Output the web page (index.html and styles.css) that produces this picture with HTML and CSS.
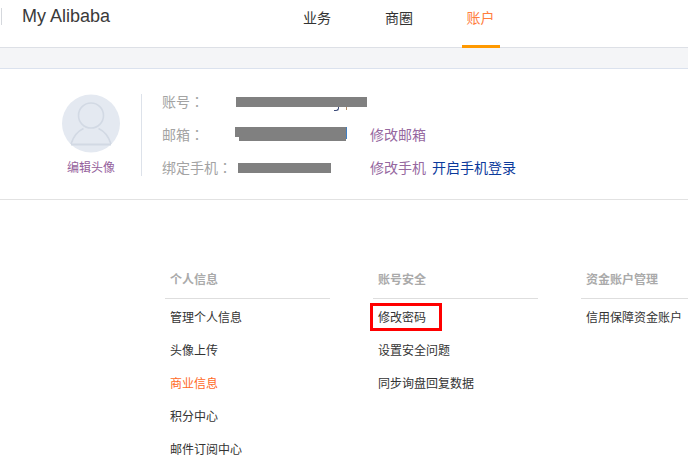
FILE: index.html
```html
<!DOCTYPE html>
<html lang="zh-CN">
<head>
<meta charset="utf-8">
<title>My Alibaba</title>
<link rel="stylesheet" href="styles.css">
</head>
<body>
<header class="topbar">
  <span class="brand-rule"></span>
  <span class="brand">My Alibaba</span>
  <nav class="tabs">
    <a class="tab">业务</a>
    <a class="tab">商圈</a>
    <a class="tab tab-active">账户</a>
  </nav>
</header>
<div class="band"></div>
<section class="profile">
  <div class="avatar-box">
    <svg class="avatar" width="58" height="59" viewBox="0 0 58 59">
      <circle cx="29" cy="29.500" r="29" fill="#e4e9f1"/>
      <circle cx="29" cy="21.500" r="12.500" fill="none" stroke="#d2d9e4" stroke-width="1.600"/>
      <path d="M9 50C11.500 42 16 37 21.500 34.500M36.500 34.500C42 37 46.500 42 49 50" fill="none" stroke="#d2d9e4" stroke-width="1.600"/>
      <path d="M9 50.500H49" stroke="#d2d9e4" stroke-width="1.800"/>
    </svg>
    <a class="avatar-link">编辑头像</a>
  </div>
  <div class="info">
    <div class="row">
      <span class="label">账号<span class="colon" lang="zh-TW">：</span></span>
      <span class="mask mask-account"></span>
    </div>
    <div class="row">
      <span class="label">邮箱<span class="colon" lang="zh-TW">：</span></span>
      <span class="mask-mail"><span class="mask mask-mail-a"></span><span class="mask mask-mail-b"></span><span class="mail-rest"></span></span>
      <a class="link-visited link-mail">修改邮箱</a>
    </div>
    <div class="row">
      <span class="label label-phone">绑定手机<span class="colon" lang="zh-TW">：</span></span>
      <span class="mask mask-phone"></span>
      <a class="link-visited link-phone">修改手机</a>
      <a class="link-blue">开启手机登录</a>
    </div>
  </div>
</section>
<main class="menus">
  <section class="menu">
    <h3 class="menu-title">个人信息</h3>
    <ul class="menu-list">
      <li class="menu-item">管理个人信息</li>
      <li class="menu-item">头像上传</li>
      <li class="menu-item menu-item-hot">商业信息</li>
      <li class="menu-item">积分中心</li>
      <li class="menu-item">邮件订阅中心</li>
    </ul>
  </section>
  <section class="menu">
    <h3 class="menu-title">账号安全</h3>
    <ul class="menu-list">
      <li class="menu-item menu-item-marked">修改密码<span class="red-box"></span></li>
      <li class="menu-item">设置安全问题</li>
      <li class="menu-item">同步询盘回复数据</li>
    </ul>
  </section>
  <section class="menu menu-last">
    <h3 class="menu-title">资金账户管理</h3>
    <ul class="menu-list">
      <li class="menu-item">信用保障资金账户</li>
    </ul>
  </section>
</main>
</body>
</html>
```
FILE: styles.css
```css
* { box-sizing: border-box; }
html, body { margin: 0; padding: 0; }
body {
  width: 688px;
  height: 466px;
  overflow: hidden;
  background: #fff;
  color: #333;
  font-family: "Liberation Sans", "Noto Sans CJK SC", sans-serif;
  font-size: 12px;
}
a { text-decoration: none; }

.topbar {
  display: flex;
  height: 48px;
  border-bottom: 1px solid #dde0e6;
  position: relative;
}
.brand-rule {
  width: 1px;
  height: 17px;
  margin: 8px 0 0 1px;
  background: #d5d8dd;
}
.brand {
  flex: none;
  width: 90px;
  margin-left: 20px;
  font-size: 18px;
  line-height: 32px;
  color: #3a3a3a;
}
.tabs {
  display: flex;
  gap: 44px;
  margin-left: 186px;
  height: 48px;
}
.tab {
  width: 38px;
  height: 48px;
  text-align: center;
  font-size: 14px;
  line-height: 36px;
  color: #333;
}
.tab-active {
  padding-right: 1px;
  color: #ff7e3e;
  border-bottom: 3px solid #ff9900;
}

.band {
  height: 21px;
  background: #f4f5f7;
  border-bottom: 1px solid #dbe2ee;
}

.profile {
  display: flex;
  height: 131px;
  padding: 25px 0 0 62px;
  border-bottom: 1px solid #e2e2e2;
}
.avatar-box {
  display: flex;
  flex-direction: column;
  align-items: center;
  width: 58px;
  height: 82px;
}
.avatar { flex: none; display: block; }
.avatar-link {
  margin-top: 6px;
  white-space: nowrap;
  font-size: 12px;
  line-height: 18px;
  color: #95619b;
}
.info {
  margin-left: 21px;
  padding-left: 20px;
  height: 82px;
  border-left: 1px solid #dde2ea;
}
.row {
  display: flex;
  align-items: center;
  height: 33px;
  margin-top: -10px;
  margin-bottom: 10px;
  font-size: 14px;
}
.label { width: 74px; color: #a3a3a3; white-space: nowrap; }
.label-phone { width: 76px; }
.colon { font-family: "Noto Sans CJK TC", sans-serif; }
.mask { display: block; background: #808080; }
.mask-account { position: relative; width: 131px; height: 10px; margin-top: 3px; }
.mask-account::before {
  content: "";
  position: absolute;
  left: 98px;
  top: 10px;
  width: 4px;
  height: 3px;
  border-right: 1px solid #3b4a78;
  border-bottom: 1px solid #3b4a78;
  border-bottom-right-radius: 3px;
}
.mask-account::after {
  content: "";
  position: absolute;
  left: 110px;
  top: 10px;
  width: 1px;
  height: 3px;
  background: #b98a5a;
}
.mask-phone { width: 93px; height: 10px; margin-top: 2px; }
.mask-mail { display: flex; align-items: flex-start; width: 112px; height: 14px; margin-left: -1px; margin-top: 1px; }
.mask-mail-a { width: 4px; height: 10px; }
.mask-mail-b { width: 107px; height: 14px; }
.mail-rest { width: 1px; height: 12px; background: #3f7fc4; }
.link-visited { color: #96689f; white-space: nowrap; }
.link-mail { margin-left: 23px; }
.link-phone { margin-left: 39px; }
.link-blue { margin-left: 6px; color: #0b3a9c; white-space: nowrap; }

.menus {
  display: flex;
  gap: 43px;
  padding: 68px 0 0 165px;
}
.menu { flex: none; width: 165px; }
.menu-last { flex: 1 1 0; width: auto; min-width: 0; }
.menu-title {
  margin: 0;
  height: 31px;
  padding-left: 5px;
  border-bottom: 1px solid #dedede;
  font-size: 12px;
  font-weight: bold;
  line-height: 24px;
  color: #aaa;
}
.menu-list {
  list-style: none;
  margin: 0;
  padding: 3px 0 0 5px;
}
.menu-item {
  height: 33px;
  line-height: 33px;
  font-size: 12px;
  color: #333;
  white-space: nowrap;
}
.menu-item-hot { color: #ff6a1f; }
.menu-item-marked { position: relative; }
.red-box {
  position: absolute;
  left: -8px;
  top: 1px;
  width: 72px;
  height: 28px;
  border: 3px solid #f00;
}
```
